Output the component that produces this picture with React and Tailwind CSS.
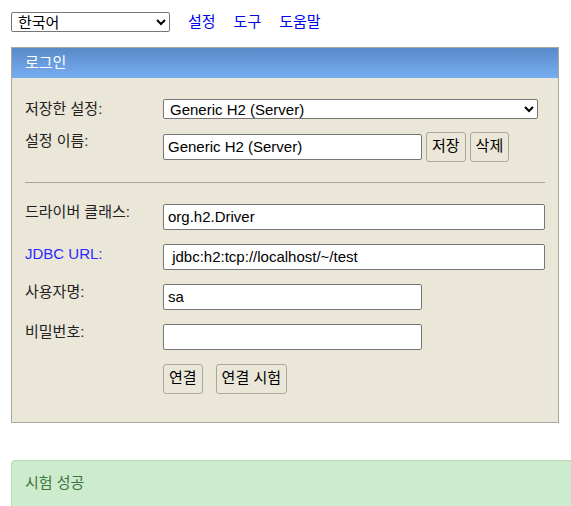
import { useState } from 'react';

const font = { fontFamily: '"Liberation Sans", "Noto Sans CJK KR", sans-serif' };

function Row({ label, blue, lift = '-mt-[8px]', children }) {
  return (
    <div className="flex items-center">
      <div className={`w-[138px] shrink-0 ${lift} ${blue ? 'text-[#2a2aff]' : 'text-[#222]'}`}>{label}</div>
      {children}
    </div>
  );
}

const inputCls =
  'h-[26px] bg-white border border-[#767676] rounded-[2px] px-[4px] text-[15px] text-black outline-none';
const btnCls =
  'h-[30px] px-[5px] border border-[#aaa79b] rounded-[3px] bg-[#ebe7d8] text-[15px] text-black';

export default function App() {
  const [name, setName] = useState('Generic H2 (Server)');
  const [driver, setDriver] = useState('org.h2.Driver');
  const [url, setUrl] = useState(' jdbc:h2:tcp://localhost/~/test');
  const [user, setUser] = useState('sa');
  const [pass, setPass] = useState('');

  return (
    <div className="w-[571px] h-[506px] overflow-hidden bg-white text-[15px]" style={font}>
      <div className="flex items-center gap-[18px] pl-[11px] pt-[12px] h-[20px] box-content">
        <select className="w-[159px] h-[20px] border border-[#767676] rounded-[2px] bg-white text-[15px] pl-[2px] text-black">
          <option>한국어</option>
        </select>
        <div className="flex gap-[18px] text-[#0000ee]">
          <span>설정</span>
          <span>도구</span>
          <span>도움말</span>
        </div>
      </div>

      <div className="ml-[11px] mt-[15px] w-[548px] border border-[#a9a69a] bg-[#ebe7d8]">
        <div className="h-[30px] flex items-center pl-[13px] text-white bg-gradient-to-b from-[#5a89c9] to-[#77aef0]">
          로그인
        </div>
        <div className="px-[13px] pt-[20px] pb-[28px] flex flex-col">
          <Row label="저장한 설정:" lift="mt-0">
            <select className="w-[375px] h-[20px] border border-[#767676] rounded-[2px] bg-white text-[15px] pl-[2px] text-black">
              <option>Generic H2 (Server)</option>
            </select>
          </Row>
          <div className="mt-[11px]">
            <Row label="설정 이름:" lift="-mt-[10px]">
              <input className={`${inputCls} w-[259px]`} value={name} onChange={e => setName(e.target.value)} />
              <button className={`${btnCls} ml-[4px]`}>저장</button>
              <button className={`${btnCls} ml-[4px]`}>삭제</button>
            </Row>
          </div>
          <div className="mt-[20px] border-t border-[#a9a69a]" />
          <div className="mt-[21px] flex flex-col gap-[14px]">
            <Row label="드라이버 클래스:">
              <input className={`${inputCls} w-[384px]`} value={driver} onChange={e => setDriver(e.target.value)} />
            </Row>
            <Row label="JDBC URL:" blue lift="-mt-[4px]">
              <input className={`${inputCls} w-[384px]`} value={url} onChange={e => setUrl(e.target.value)} />
            </Row>
            <Row label="사용자명:">
              <input className={`${inputCls} w-[259px]`} value={user} onChange={e => setUser(e.target.value)} />
            </Row>
            <Row label="비밀번호:">
              <input type="password" className={`${inputCls} w-[259px]`} value={pass} onChange={e => setPass(e.target.value)} />
            </Row>
            <div className="flex pl-[138px] gap-[13px]">
              <button className={btnCls}>연결</button>
              <button className={btnCls}>연결 시험</button>
            </div>
          </div>
        </div>
      </div>

      <div className="ml-[11px] mt-[37px] w-[580px] h-[48px] flex items-center pl-[13px] bg-[#cdebcd] border border-[#b5dcb5] rounded-[4px] text-[#3c763d]">
        시험 성공
      </div>
    </div>
  );
}
